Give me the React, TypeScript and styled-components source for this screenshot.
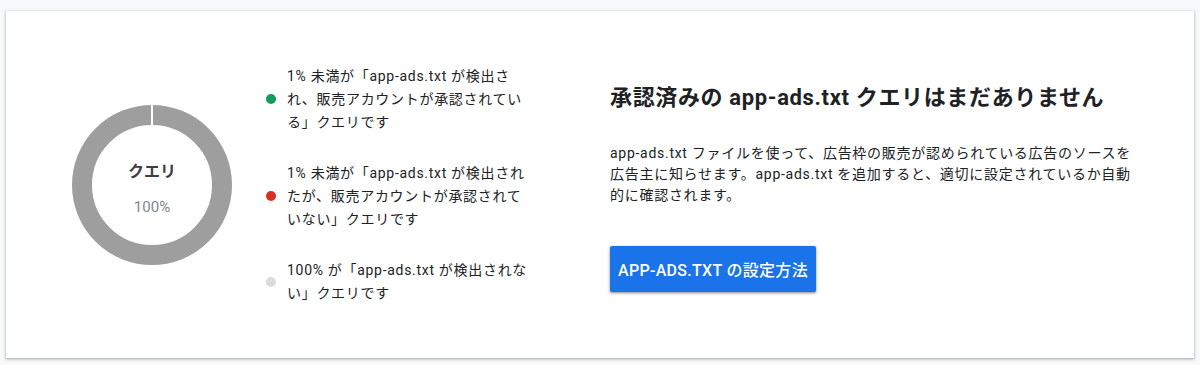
import * as React from 'react';
import styled, { createGlobalStyle } from 'styled-components';

const GlobalStyle = createGlobalStyle`
  html, body {
    margin: 0;
    padding: 0;
    background: #f8f9fa;
  }
  body {
    font-family: Roboto, "Noto Sans CJK JP", sans-serif;
    color: #202124;
  }
`;

type LegendItemData = {
  color: string;
  lines: string[];
};

const LEGEND: LegendItemData[] = [
  {
    color: '#0f9d58',
    lines: ['1% 未満が「app-ads.txt が検出さ', 'れ、販売アカウントが承認されてい', 'る」クエリです'],
  },
  {
    color: '#d93025',
    lines: ['1% 未満が「app-ads.txt が検出され', 'たが、販売アカウントが承認されて', 'いない」クエリです'],
  },
  {
    color: '#dadce0',
    lines: ['100% が「app-ads.txt が検出されな', 'い」クエリです'],
  },
];

function Donut() {
  return (
    <DonutWrapper>
      <svg width="160" height="160" viewBox="0 0 160 160">
        <circle cx="80" cy="80" r="70" fill="none" stroke="#9e9e9e" strokeWidth="20" />
        <rect x="79" y="0" width="2" height="22" fill="#ffffff" />
      </svg>
      <DonutLabel>
        <DonutTitle>クエリ</DonutTitle>
        <DonutValue>100%</DonutValue>
      </DonutLabel>
    </DonutWrapper>
  );
}

export default function App() {
  return (
    <>
      <GlobalStyle />
      <Page>
        <Card>
          <ChartSection>
            <Donut />
            <Legend>
              {LEGEND.map((item, i) => (
                <LegendItem key={i}>
                  <Dot $color={item.color} />
                  <LegendText>
                    {item.lines.map((l, j) => (
                      <span key={j}>{l}</span>
                    ))}
                  </LegendText>
                </LegendItem>
              ))}
            </Legend>
          </ChartSection>
          <InfoSection>
            <Heading>承認済みの app-ads.txt クエリはまだありません</Heading>
            <Description>
              <span>app-ads.txt ファイルを使って、広告枠の販売が認められている広告のソースを</span>
              <span>広告主に知らせます。app-ads.txt を追加すると、適切に設定されているか自動</span>
              <span>的に確認されます。</span>
            </Description>
            <PrimaryButton>APP-ADS.TXT の設定方法</PrimaryButton>
          </InfoSection>
        </Card>
      </Page>
    </>
  );
}

const Page = styled.div`
  padding: 11px 6px 7px;
`;

const Card = styled.div`
  background: #ffffff;
  height: 347px;
  box-sizing: border-box;
  box-shadow: 0 1px 2px rgba(60, 64, 67, 0.3), 0 1px 3px 1px rgba(60, 64, 67, 0.15);
  display: flex;
  align-items: center;
  padding-left: 66px;
`;

const ChartSection = styled.div`
  display: flex;
  align-items: center;
  gap: 34px;
  width: 538px;
`;

const DonutWrapper = styled.div`
  position: relative;
  width: 160px;
  height: 160px;
  flex-shrink: 0;
`;

const DonutLabel = styled.div`
  position: absolute;
  inset: 0;
  display: flex;
  flex-direction: column;
  align-items: center;
  justify-content: center;
  gap: 16px;
  padding-top: 4px;
`;

const DonutTitle = styled.div`
  font-size: 16px;
  font-weight: 700;
  color: #3c4043;
`;

const DonutValue = styled.div`
  font-size: 15px;
  color: #80868b;
`;

const Legend = styled.div`
  display: flex;
  flex-direction: column;
  gap: 28px;
`;

const LegendItem = styled.div`
  display: flex;
  align-items: center;
  gap: 11px;
`;

const Dot = styled.span<{ $color: string }>`
  width: 10px;
  height: 10px;
  border-radius: 50%;
  background: ${(p) => p.$color};
  flex-shrink: 0;
`;

const LegendText = styled.div`
  display: flex;
  flex-direction: column;
  font-size: 14px;
  line-height: 23px;
  letter-spacing: 0.7px;
  white-space: nowrap;
  color: #202124;
`;

const InfoSection = styled.div`
  display: flex;
  flex-direction: column;
  align-items: flex-start;
  padding-top: 5px;
`;

const Heading = styled.h2`
  margin: 0 0 30px;
  font-size: 22px;
  font-weight: 700;
  line-height: 30px;
  letter-spacing: 0.65px;
  color: #202124;
`;

const Description = styled.p`
  margin: 0 0 40px;
  display: flex;
  flex-direction: column;
  font-size: 14px;
  line-height: 21px;
  letter-spacing: 0.72px;
  white-space: nowrap;
  color: #202124;
`;

const PrimaryButton = styled.button`
  height: 46px;
  padding: 0 8px;
  border: none;
  border-radius: 2px;
  background: #1a73e8;
  color: #ffffff;
  font-family: Roboto, "Noto Sans CJK JP", sans-serif;
  font-size: 16px;
  font-weight: 500;
  letter-spacing: 0.3px;
  box-shadow: 0 1px 2px rgba(0, 0, 0, 0.3), 0 1px 3px 1px rgba(0, 0, 0, 0.15);
  cursor: pointer;
`;
